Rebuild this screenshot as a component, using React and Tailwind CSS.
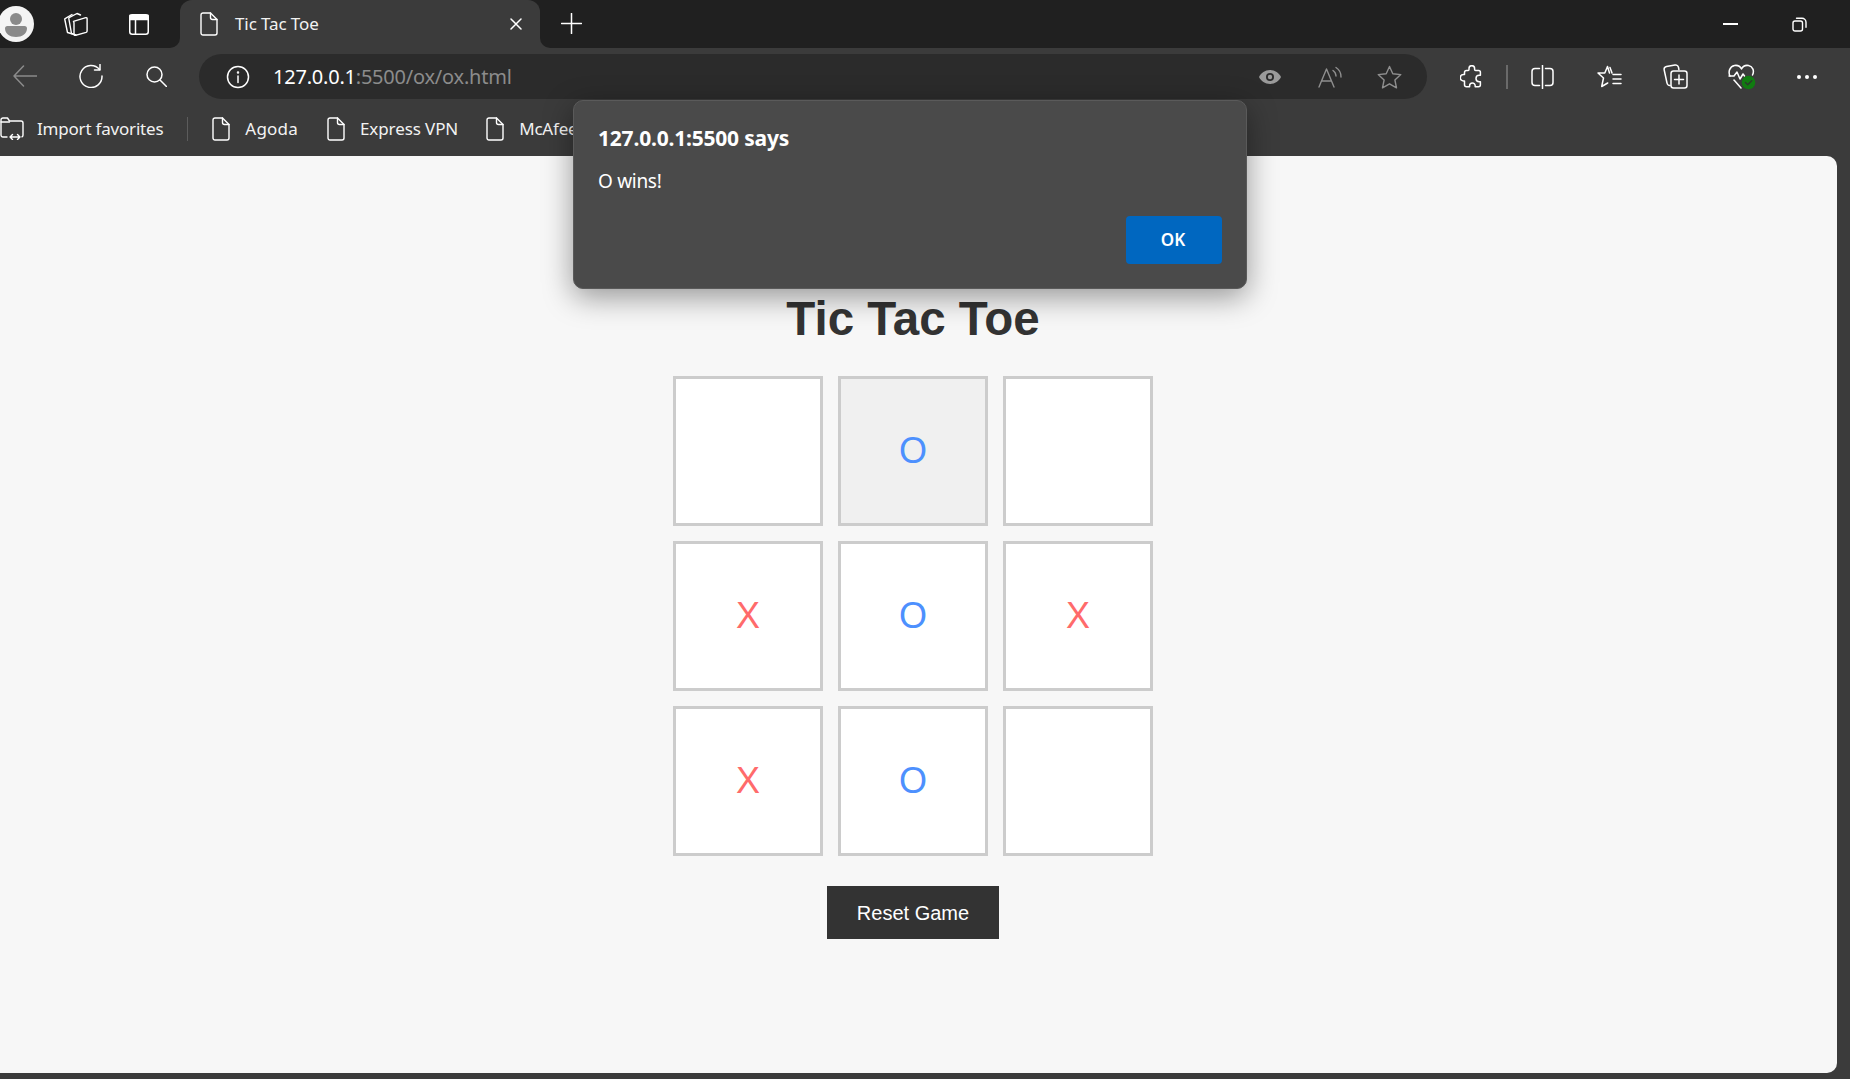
import React from "react";

const UI = "font-['Noto_Sans','Open_Sans',sans-serif]";
const ARIAL = "font-['Liberation_Sans',Arial,sans-serif]";

function I({ w, h, vb, className = "", sw = 1.5, color = "#ffffff", children }) {
  return (
    <svg width={w} height={h} viewBox={vb || `0 0 ${w} ${h}`} fill="none" stroke={color} strokeWidth={sw} strokeLinecap="round" strokeLinejoin="round" className={`shrink-0 block ${className}`}>
      {children}
    </svg>
  );
}

const FileIcon = ({ className = "" }) => (
  <I w={18} h={24} className={className} sw={1.4}>
    <path d="M3 1h7.5L17 7.5V21a2 2 0 0 1-2 2H3a2 2 0 0 1-2-2V3a2 2 0 0 1 2-2Z" />
    <path d="M10.5 1v4.5a2 2 0 0 0 2 2H17" />
  </I>
);

function Cell({ v, played }) {
  return (
    <div className={`w-[150px] h-[150px] border-[3px] border-[#cccccc] flex items-center justify-center text-[36px] leading-none ${played ? "bg-[#f0f0f0]" : "bg-white"} ${v === "X" ? "text-[#ff6b6b]" : "text-[#4d90fe]"}`}>
      {v}
    </div>
  );
}

export default function App() {
  const board = ["", "O", "", "X", "O", "X", "X", "O", ""];
  return (
    <div className={`relative w-[1850px] h-[1079px] overflow-hidden flex flex-col bg-[#3b3b3b] ${UI}`}>
      {/* Tab strip */}
      <div className="h-12 shrink-0 bg-[#202020] flex items-center text-white">
        <svg width="36" height="36" viewBox="0 0 36 36" className="shrink-0 -ml-[2px]">
          <circle cx="18" cy="18" r="18" fill="#f4f4f4" />
          <circle cx="18" cy="13" r="6" fill="#8a8a8a" />
          <path d="M7 22.500a2.500 2.500 0 0 1 2.500-2.500h17a2.500 2.500 0 0 1 2.500 2.500c0 5-5 8.500-11 8.500S7 27.500 7 22.500Z" fill="#8a8a8a" />
        </svg>
        <I w={24} h={24} className="ml-[30px]" sw={1.4}>
          <path d="M8.500 22 3.500 20.500 0.800 7.500a1 1 0 0 1 .7-1.200L8 2.500" />
          <path d="M12 23 7.500 21.500 4.800 6.500a1 1 0 0 1 .7-1.200L13 1.500l3.500 1.500" />
          <path d="M9.500 9.300 21.800 5.700a1 1 0 0 1 1.300 1V19a1.500 1.500 0 0 1-1 1.400l-10.800 3a1 1 0 0 1-1.300-1V10.500a1.200 1.200 0 0 1-.5-1.200Z" />
        </I>
        <svg width="20" height="21" viewBox="0 0 20 21" fill="none" stroke="#fff" strokeWidth="1.500" className="shrink-0 ml-[41px]">
          <rect x="0.750" y="0.750" width="18.500" height="19.500" rx="2.500" />
          <path d="M1 1.500h18v4H1z" fill="#fff" />
          <path d="M6.500 6v14" />
        </svg>
        <div className="relative ml-[31px] w-[360px] h-12 bg-[#3b3b3b] rounded-t-[12px] flex items-center pl-[20px] pr-[18px]">
          <div className="absolute -left-[10px] bottom-0 w-[10px] h-[10px] bg-[#3b3b3b]">
            <div className="w-full h-full bg-[#202020] rounded-br-[10px]" />
          </div>
          <div className="absolute -right-[10px] bottom-0 w-[10px] h-[10px] bg-[#3b3b3b]">
            <div className="w-full h-full bg-[#202020] rounded-bl-[10px]" />
          </div>
          <FileIcon />
          <span className="ml-[17px] pb-[2px] text-[17px] leading-none text-[#f2f2f2] tracking-[-0.1px]">Tic Tac Toe</span>
          <I w={12} h={12} className="ml-auto" sw={1.500}>
            <path d="M1 1l10 10M11 1 1 11" />
          </I>
        </div>
        <I w={21} h={21} className="ml-[21px] -mt-[1px]" sw={1.500}>
          <path d="M10.500 0.500v20M0.500 10.500h20" />
        </I>
        <I w={15} h={2} className="ml-auto" sw={2} vb="0 0 15 2">
          <path d="M0 1h15" />
        </I>
        <I w={15} h={15} className="ml-[54px] mr-[43px]" sw={1.400}>
          <rect x="1" y="4" width="9.500" height="10" rx="2" />
          <path d="M4.500 1.200h5.500a4 4 0 0 1 4 4v5" />
        </I>
      </div>

      {/* Toolbar */}
      <div className="h-[57px] shrink-0 flex items-center">
        <I w={24} h={22} className="ml-[13px] -mt-[1px]" color="#8b8b8b" sw={1.500}>
          <path d="M1 11h23M10.500 1 1 11l9.500 10" />
        </I>
        <I w={24} h={24} className="ml-[42px] -mt-[1px]" sw={1.500}>
          <path d="M20.500 5.500A11 11 0 1 0 23 12" />
          <path d="M21 0.500v5.500h-5.500" />
        </I>
        <I w={21} h={21} className="ml-[43px]" sw={1.500}>
          <circle cx="8.500" cy="8.500" r="7.500" />
          <path d="m14 14 6.500 6.500" />
        </I>
        <div className="ml-[32px] w-[1228px] h-[45px] rounded-full bg-[#2b2b2b] flex items-center pl-[27px] pr-[25px]">
          <I w={24} h={24} sw={1.500}>
            <circle cx="12" cy="12" r="10.500" />
            <path d="M12 11v6.500" />
            <circle cx="12" cy="7.500" r="0.500" fill="#fff" />
          </I>
          <span className="ml-[23px] text-[20px] leading-none text-white tracking-[-0.22px]">
            127.0.0.1<span className="text-[#8c8c8c]">:5500/ox/ox.html</span>
          </span>
          <svg width="22" height="14" viewBox="0 0 22 14" className="shrink-0 ml-auto">
            <path d="M11 0C6 0 2 3 0 7c2 4 6 7 11 7s9-3 11-7c-2-4-6-7-11-7Z" fill="#9a9a9a" />
            <circle cx="11" cy="7" r="4" fill="#2b2b2b" />
            <circle cx="11" cy="7" r="2.200" fill="#9a9a9a" />
          </svg>
          <I w={24} h={22} className="ml-[37px]" color="#8f8f8f" sw={1.400}>
            <path d="M1 21 8.500 3l7.500 18M3.800 15h9.500" />
            <path d="M15 4.500a7 7 0 0 1 3 5.500M18 1.500a11 11 0 0 1 5 9.500" />
          </I>
          <I w={25} h={24} className="ml-[35px]" color="#8f8f8f" sw={1.400}>
            <path d="m12.500 1.500 3.300 7.200 8 .9-5.900 5.400 1.600 7.800-7-4-7 4 1.600-7.800L1.200 9.600l8-.9Z" />
          </I>
        </div>
        <I w={23} h={24} className="ml-[33px]" sw={1.500}>
          <path d="M9 4.500V3.500a2.800 2.800 0 0 1 5.600 0v1c0 .5.400 1 1 1h3c1 0 1.800.8 1.800 1.800v3h-1.200a3 3 0 0 0 0 6.400h1.200v3c0 1.200-.9 2-2 2h-3.200v-1a2.800 2.800 0 0 0-5.600 0v1H6.500a2 2 0 0 1-2-2v-3.700h-1a3.200 3.200 0 0 1 0-6.400h1V7.500c0-1.200.9-2 2-2h1.600c.5 0 .9-.5.900-1Z" />
        </I>
        <div className="ml-[23px] w-[2px] h-[24px] bg-[#6a6a6a]" />
        <I w={23} h={24} className="ml-[23px]" sw={1.500}>
          <path d="M8.500 3.500H4a3 3 0 0 0-3 3v11a3 3 0 0 0 3 3h4.500M14.500 3.500H19a3 3 0 0 1 3 3v11a3 3 0 0 1-3 3h-4.500" />
          <path d="M11.500 0.500v23" />
        </I>
        <I w={25} h={24} className="ml-[43px]" sw={1.500}>
          <path d="M12.500 8 10.500 1.500 7.800 8H1l5.500 5-1.800 8.500 6-3.500" />
          <path d="M13 2.500l2 5.500M16 9.500h8M16 14h8M16 18.500h8" />
        </I>
        <I w={25} h={25} className="ml-[41px]" sw={1.500}>
          <path d="M7 21.500A3 3 0 0 1 4 19L1.200 6A3 3 0 0 1 3.500 2.500L12 1a3 3 0 0 1 3.500 2.500l.4 2" />
          <rect x="8" y="7" width="16" height="17" rx="2.500" />
          <path d="M16 11v9M11.500 15.500h9" />
        </I>
        <svg width="28" height="26" viewBox="0 0 28 26" fill="none" stroke="#fff" strokeWidth="1.500" strokeLinecap="round" strokeLinejoin="round" className="shrink-0 ml-[40px]">
          <path d="M2 12C0 8 1.500 2.500 6.500 1.500c3-.5 5.500.5 7 3.500 1.500-3 4-4 7-3.500C25 2.500 26.500 7 24.500 11" />
          <path d="M1 12h5l3-4 3 7 3-5 1.500 2" />
          <path d="M6 16l7 8" />
          <circle cx="20.500" cy="18.500" r="6.800" fill="#107c10" stroke="none" />
          <path d="m17.500 18.500 2.200 2.200 4-4" stroke="#2b3a2b" strokeWidth="1.500" />
        </svg>
        <div className="ml-[41px] w-[20px] flex justify-between">
          <div className="w-[4px] h-[4px] rounded-full bg-white" />
          <div className="w-[4px] h-[4px] rounded-full bg-white" />
          <div className="w-[4px] h-[4px] rounded-full bg-white" />
        </div>
      </div>

      {/* Favorites bar */}
      <div className="h-[51px] shrink-0 flex items-center pb-[4px] text-[17px] leading-none text-[#f2f2f2] tracking-[-0.2px]">
        <I w={24} h={23} sw={1.400}>
          <path d="M7 20H3a2 2 0 0 1-2-2V3a2 2 0 0 1 2-2h4.500l2 3H21a2 2 0 0 1 2 2v12a2 2 0 0 1-1 1.800" />
          <path d="M1 5h8.500" />
          <path d="M10 20h10M12.500 17.500 10 20l2.500 2.500M17.500 17.500 20 20l-2.500 2.500" />
        </I>
        <span className="ml-[13px]">Import favorites</span>
        <div className="ml-[24px] w-px h-[24px] bg-[#5c5c5c]" />
        <FileIcon className="ml-[24px]" />
        <span className="ml-[15px] tracking-[0.2px]">Agoda</span>
        <FileIcon className="ml-[29px]" />
        <span className="ml-[15px] tracking-[-0.1px]">Express VPN</span>
        <FileIcon className="ml-[28px]" />
        <span className="ml-[15px]">McAfee</span>
      </div>

      {/* Page */}
      <div className={`flex-1 mr-[13px] mb-[6px] rounded-r-[10px] bg-[#f7f7f7] flex flex-col items-center pt-[135px] pr-[11px] ${ARIAL}`}>
        <h1 className="text-[47.5px] leading-[55px] font-bold text-[#333333] mb-[30px]">Tic Tac Toe</h1>
        <div className="grid grid-cols-[150px_150px_150px] gap-[15px]">
          {board.map((v, i) => (
            <Cell key={i} v={v} played={i === 1} />
          ))}
        </div>
        <button className="mt-[30px] w-[172px] h-[53px] bg-[#333333] text-white text-[20px] leading-none">Reset Game</button>
      </div>

      {/* Alert dialog */}
      <div className="absolute left-[573px] top-[100px] w-[674px] h-[189px] rounded-[10px] bg-[#4a4a4a] border border-[#5a5a5a] shadow-[0_8px_30px_rgba(0,0,0,0.4)] pt-[23px] pl-[24px] pr-[24px] text-white flex flex-col">
        <div className="text-[21px] leading-[28px] font-bold tracking-[-0.2px]">127.0.0.1:5500 says</div>
        <div className="mt-[16px] text-[19px] leading-[26px] tracking-[-0.3px]">O wins!</div>
        <div className="mt-auto mb-[24px] flex justify-end">
          <button className="w-[96px] h-[48px] rounded-[4px] bg-[#0067c0] text-white text-[17px] font-semibold pr-[2px]">OK</button>
        </div>
      </div>
    </div>
  );
}
